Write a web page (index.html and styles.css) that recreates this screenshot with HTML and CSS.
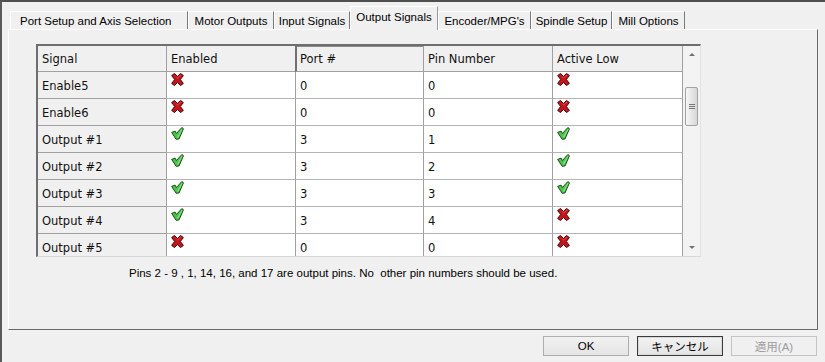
FILE: index.html
```html
<!DOCTYPE html>
<html lang="en">
<head>
    <meta charset="UTF-8">
    <title>Output Signals</title>

    <link rel="stylesheet" href="styles.css">

</head>
<body>

<svg class="defs" width="0" height="0">
    <symbol id="no" viewBox="0 0 12 12">
        <polygon points="0.6,2.4 3.2,0.4 6,3.2 8.8,0.4 11.4,2.4 8.6,6 11.4,9.6 8.8,11.6 6,8.8 3.2,11.6 0.6,9.6 3.4,6"
                 fill="#c4141c" stroke="#3c0000" stroke-width="0.9" stroke-linejoin="round"/>
        <polygon points="3.2,1.4 6,4.2 8.8,1.4 9.8,2.1 6,5.4" fill="#ff5a5a" opacity="0.55"/>
    </symbol>
    <symbol id="yes" viewBox="0 0 12 12">
        <path d="M0.6,5 L3.8,3.8 L5,6 L10,0.5 L11.5,1.6 L7.4,11 L4.8,11.4 Z"
              fill="#4cc44c" stroke="#124a12" stroke-width="0.9" stroke-linejoin="round"/>
        <path d="M5.4,9.8 L6.8,9.5 L10.6,2 L10,1.7 Z" fill="#a8eea8" opacity="0.7"/>
    </symbol>
</svg>

<div class="window">

    <div class="tabs">
        <div class="tab t1">Port Setup and Axis Selection</div>
        <div class="tab t2">Motor Outputs</div>
        <div class="tab t3">Input Signals</div>
        <div class="tab active t4">Output Signals</div>
        <div class="tab t5">Encoder/MPG's</div>
        <div class="tab t6">Spindle Setup</div>
        <div class="tab t7">Mill Options</div>
    </div>

    <div class="panel">
        <div class="grid">
            <div class="grid_body">
                <div class="row head">
                    <div class="cell">Signal</div>
                    <div class="cell">Enabled</div>
                    <div class="cell port_head">Port #</div>
                    <div class="cell">Pin Number</div>
                    <div class="cell">Active Low</div>
                </div>

                <div class="row">
                    <div class="cell name">Enable5</div>
                    <div class="cell icon"><svg><use href="#no"/></svg></div>
                    <div class="cell">0</div>
                    <div class="cell">0</div>
                    <div class="cell icon"><svg><use href="#no"/></svg></div>
                </div>
                <div class="row">
                    <div class="cell name">Enable6</div>
                    <div class="cell icon"><svg><use href="#no"/></svg></div>
                    <div class="cell">0</div>
                    <div class="cell">0</div>
                    <div class="cell icon"><svg><use href="#no"/></svg></div>
                </div>
                <div class="row">
                    <div class="cell name">Output #1</div>
                    <div class="cell icon"><svg><use href="#yes"/></svg></div>
                    <div class="cell">3</div>
                    <div class="cell">1</div>
                    <div class="cell icon"><svg><use href="#yes"/></svg></div>
                </div>
                <div class="row">
                    <div class="cell name">Output #2</div>
                    <div class="cell icon"><svg><use href="#yes"/></svg></div>
                    <div class="cell">3</div>
                    <div class="cell">2</div>
                    <div class="cell icon"><svg><use href="#yes"/></svg></div>
                </div>
                <div class="row">
                    <div class="cell name">Output #3</div>
                    <div class="cell icon"><svg><use href="#yes"/></svg></div>
                    <div class="cell">3</div>
                    <div class="cell">3</div>
                    <div class="cell icon"><svg><use href="#yes"/></svg></div>
                </div>
                <div class="row">
                    <div class="cell name">Output #4</div>
                    <div class="cell icon"><svg><use href="#yes"/></svg></div>
                    <div class="cell">3</div>
                    <div class="cell">4</div>
                    <div class="cell icon"><svg><use href="#no"/></svg></div>
                </div>
                <div class="row">
                    <div class="cell name">Output #5</div>
                    <div class="cell icon"><svg><use href="#no"/></svg></div>
                    <div class="cell">0</div>
                    <div class="cell">0</div>
                    <div class="cell icon"><svg><use href="#no"/></svg></div>
                </div>
            </div>

            <div class="scrollbar">
                <div class="arrow up"></div>
                <div class="track">
                    <div class="thumb"><span></span><span></span><span></span></div>
                </div>
                <div class="arrow down"></div>
            </div>
        </div>

        <p class="note">Pins 2 - 9 , 1, 14, 16, and 17 are output pins. No&nbsp; other pin numbers should be used.</p>
    </div>

    <div class="buttons">
        <button class="btn">OK</button>
        <button class="btn default">キャンセル</button>
        <button class="btn" disabled>適用(A)</button>
    </div>

</div>

</body>
</html>
```

FILE: styles.css
```css
body{
    margin: 0;
    background-color: #f0f0f0;
    font-family: "Liberation Sans", "Noto Sans CJK JP", sans-serif;
    font-size: 11.5px;
    color: #000;
}

.defs{
    position: absolute;
}

.window{
    width: 825px;
    height: 362px;
    box-sizing: border-box;
    border-top: 2px solid #4f4f4f;
    border-left: 2px solid #5a5a5a;
    overflow: hidden;
}

/* tab strip */

.tabs{
    display: flex;
    align-items: flex-end;
    height: 27px;
    padding-left: 8px;
    position: relative;
    z-index: 1;
}

.tab{
    height: 18px;
    box-sizing: border-box;
    display: flex;
    align-items: center;
    justify-content: center;
    border-top: 1px solid #fff;
    border-left: 1px solid #fff;
    border-right: 1px solid #7a7a7a;
    white-space: nowrap;
    padding-top: 1px;
}

.tab.active{
    height: 24px;
    margin-bottom: -1px;
    background-color: #f0f0f0;
    border-right: 1px solid #9a9a9a;
    padding-top: 0;
    padding-bottom: 4px;
}

.t1{ width: 178px; justify-content: flex-start; padding-left: 9px; }
.t2{ width: 86px; }
.t3{ width: 76px; }
.t4{ width: 88px; }
.t5{ width: 93px; }
.t6{ width: 81px; }
.t7{ width: 73px; }

/* page panel */

.panel{
    margin-left: 6px;
    width: 810px;
    height: 301px;
    box-sizing: border-box;
    border-top: 1px solid #fff;
    border-left: 1px solid #fff;
    border-right: 1px solid #6a6a6a;
    border-bottom: 1px solid #6a6a6a;
    padding-top: 14px;
    padding-left: 27px;
}

.grid{
    display: flex;
    width: 665px;
    height: 213px;
    box-sizing: border-box;
    border-top: 2px solid #6e6e6e;
    border-left: 2px solid #6e6e6e;
    border-right: 1px solid #e2e2e2;
    border-bottom: 1px solid #d8d8d8;
    font-family: "DejaVu Sans", sans-serif;
    font-size: 11.5px;
    color: #111;
}

.grid_body{
    width: 645px;
    height: 210px;
    overflow: hidden;
    background-color: #fff;
}

.row{
    display: grid;
    grid-template-columns: 129px 129px 128px 129px 130px;
    height: 27px;
}

.cell{
    box-sizing: border-box;
    border-right: 1px solid #a0a0a0;
    border-bottom: 1px solid #b4b4b4;
    padding-left: 4px;
    display: flex;
    align-items: center;
    padding-top: 1px;
}

.head{
    height: 26px;
}

.head .cell{
    background-color: #f0f0f0;
    border-bottom: 1px solid #a0a0a0;
}

.head .port_head{
    border-left: 2px solid #707070;
    margin-left: -1px;
    box-shadow: inset 0 1px 0 #8a8a8a;
    padding-left: 3px;
}

.name{
    background-color: #f0f0f0;
    border-bottom: 1px solid #a0a0a0;
}

.icon{
    align-items: flex-start;
    padding-top: 1px;
    padding-left: 4px;
}

.icon svg{
    width: 13px;
    height: 13px;
}

/* scrollbar */

.scrollbar{
    width: 17px;
    display: flex;
    flex-direction: column;
    background-color: #f3f3f3;
}

.arrow{
    height: 17px;
    display: flex;
    justify-content: center;
    align-items: center;
}

.arrow::before{
    content: "";
    border-left: 3px solid transparent;
    border-right: 3px solid transparent;
}

.up::before{
    border-bottom: 3px solid #707070;
}

.down::before{
    border-top: 3px solid #707070;
}

.track{
    flex: 1;
    padding-top: 24px;
}

.thumb{
    margin-left: 2px;
    width: 13px;
    height: 39px;
    box-sizing: border-box;
    border: 1px solid #a2a2a2;
    border-radius: 2px;
    background: linear-gradient(to right, #f6f6f6, #e4e4e4 60%, #d6d6d6);
    display: flex;
    flex-direction: column;
    justify-content: center;
    align-items: center;
    gap: 1px;
}

.thumb span{
    width: 6px;
    height: 1px;
    background-color: #777;
}

.note{
    margin: 9px 0 0 93px;
    font-size: 11.5px;
    line-height: 14px;
}

/* dialog buttons */

.buttons{
    display: flex;
    justify-content: flex-end;
    gap: 8px;
    padding-right: 8px;
    margin-top: 6px;
}

.btn{
    width: 86px;
    height: 20px;
    font-family: "Liberation Sans", "Noto Sans CJK JP", sans-serif;
    font-size: 11.5px;
    border: 1px solid #adadad;
    background: linear-gradient(#f2f2f2, #e4e4e4);
    color: #000;
    padding: 0;
}

.btn.default{
    border: 1px solid #3c3c3c;
    box-shadow: inset 0 0 0 1px #d8d8d8;
}

.btn:disabled{
    color: #9c9c9c;
    border-color: #c4c4c4;
    background: #f0f0f0;
}
```
